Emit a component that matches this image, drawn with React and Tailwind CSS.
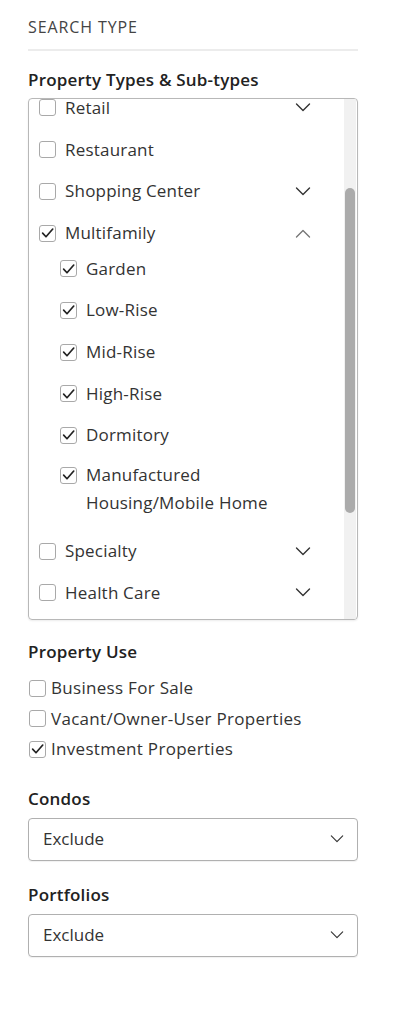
import React from "react";

const FONT = { fontFamily: '"Open Sans", "Liberation Sans", sans-serif' };

function Check() {
  return (
    <svg width="16" height="16" viewBox="0 0 16 16" className="block">
      <polyline points="2.8,8.2 6.4,12 13.6,3.8" fill="none" stroke="#222" strokeWidth="1.8" strokeLinecap="round" strokeLinejoin="round" />
    </svg>
  );
}

function Box({ checked }) {
  return (
    <span className="w-[17px] h-[17px] shrink-0 rounded-[3px] border border-[#a9a9a9] bg-white flex items-center justify-center">
      {checked ? <Check /> : null}
    </span>
  );
}

function Chevron({ up, w = 16, h = 9, color = "#333", sw = 1.4 }) {
  return (
    <svg width={w} height={h} viewBox="0 0 16 9" className="block shrink-0">
      <polyline points={up ? "1.5,8 8,1.5 14.5,8" : "1.5,1 8,7.5 14.5,1"} fill="none" stroke={up ? "#777" : color} strokeWidth={sw} strokeLinecap="round" strokeLinejoin="round" />
    </svg>
  );
}

function TopRow({ label, checked, chevron, up }) {
  return (
    <div className="h-[41.7px] flex items-center pl-[10px] pr-[33px]">
      <Box checked={checked} />
      <span className="ml-[9px] flex-1 text-[17px] leading-[24px] text-[#333] tracking-[0.2px]">{label}</span>
      {chevron ? <Chevron up={up} /> : null}
    </div>
  );
}

function SubRow({ label }) {
  return (
    <div className="h-[41.7px] flex items-center pl-[31px]">
      <Box checked />
      <span className="ml-[9px] text-[17px] leading-[24px] text-[#333] tracking-[0.2px]">{label}</span>
    </div>
  );
}

function UseRow({ label, checked }) {
  return (
    <div className="h-[30.5px] flex items-center pl-[1px]">
      <Box checked={checked} />
      <span className="ml-[5px] text-[17px] leading-[24px] text-[#333] tracking-[0.3px]">{label}</span>
    </div>
  );
}

function Select({ value }) {
  return (
    <div className="h-[43px] rounded-[4px] border border-[#b0b0b0] flex items-center pl-[14px] pr-[13px] shadow-[0_1px_1px_rgba(0,0,0,0.06)]">
      <span className="flex-1 text-[17px] leading-[24px] text-[#333]">{value}</span>
      <Chevron w={14} h={8} sw={1.3} />
    </div>
  );
}

const H = "text-[17px] leading-[20px] font-semibold text-[#222] tracking-[0.2px]";

export default function App() {
  return (
    <div className="w-[400px] h-[1010px] bg-white" style={FONT}>
      <div className="pl-[28px] w-[358px] pt-[17px]">
        <div className="text-[16px] leading-[20px] text-[#444] tracking-[0.9px]">SEARCH TYPE</div>
        <div className="mt-[12px] h-[2px] bg-[#ececec]" />

        <div className={"mt-[19px] " + H}>Property Types &amp; Sub-types</div>

        <div className="mt-[8px] h-[522px] rounded-[4px] border border-[#b8b8b8] flex overflow-hidden shadow-[0_1px_2px_rgba(0,0,0,0.08)]">
          <div className="flex-1 overflow-hidden">
            <div className="-mt-[11.9px]">
              <TopRow label="Retail" chevron />
              <TopRow label="Restaurant" />
              <TopRow label="Shopping Center" chevron />
              <TopRow label="Multifamily" checked chevron up />
              <div className="-mt-[6px]">
                <SubRow label="Garden" />
                <SubRow label="Low-Rise" />
                <SubRow label="Mid-Rise" />
                <SubRow label="High-Rise" />
                <SubRow label="Dormitory" />
                <div className="flex items-start pl-[31px] pt-[5px] pb-[13px]">
                  <div className="h-[28px] flex items-center">
                    <Box checked />
                  </div>
                  <span className="ml-[9px] text-[17px] leading-[28px] text-[#333] tracking-[0.2px]">
                    Manufactured
                    <br />
                    Housing/Mobile Home
                  </span>
                </div>
              </div>
              <TopRow label="Specialty" chevron />
              <TopRow label="Health Care" chevron />
            </div>
          </div>
          <div className="w-[12px] mr-[1px] bg-[#f1f1f1] flex flex-col items-center">
            <div className="mt-[89px] w-[10px] h-[325px] rounded-full bg-[#ababab]" />
          </div>
        </div>

        <div className={"mt-[22px] " + H}>Property Use</div>
        <div className="mt-[11px]">
          <UseRow label="Business For Sale" />
          <UseRow label="Vacant/Owner-User Properties" />
          <UseRow label="Investment Properties" checked />
        </div>

        <div className={"mt-[24px] " + H}>Condos</div>
        <div className="mt-[9px]">
          <Select value="Exclude" />
        </div>

        <div className={"mt-[24px] " + H}>Portfolios</div>
        <div className="mt-[9px]">
          <Select value="Exclude" />
        </div>
      </div>
    </div>
  );
}
